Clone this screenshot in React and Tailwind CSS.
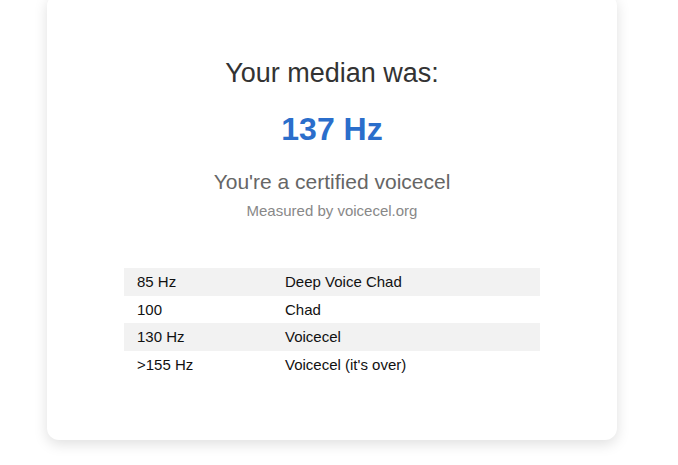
const rows = [
  { hz: '85 Hz', label: 'Deep Voice Chad' },
  { hz: '100', label: 'Chad' },
  { hz: '130 Hz', label: 'Voicecel' },
  { hz: '>155 Hz', label: "Voicecel (it's over)" },
];

export default function App() {
  return (
    <div className="min-h-screen bg-white font-['Liberation_Sans',Arial,sans-serif]">
      <div className="ml-[47px] -mt-[6px] w-[570px] rounded-xl bg-white pt-[63px] pb-[62px] shadow-[0_4px_14px_rgba(0,0,0,0.13)] flex flex-col items-center text-center">
        <h1 className="text-[27px] leading-[32px] text-[#333]">Your median was:</h1>
        <div className="mt-[21px] text-[32px] leading-[38px] font-bold text-[#2b6ecb]">137 Hz</div>
        <p className="mt-[21px] text-[21px] leading-[25px] text-[#666]">You're a certified voicecel</p>
        <p className="mt-[8px] text-[15px] leading-[18px] text-[#888]">Measured by voicecel.org</p>

        <table className="mt-[48px] w-[416px] text-left text-[15px] text-[#111] border-collapse">
          <tbody>
            {rows.map((r, i) => (
              <tr key={i} className={i % 2 === 0 ? 'bg-[#f2f2f2]' : ''}>
                <td className="w-[161px] pl-[13px] py-[5px] leading-[17.5px]">{r.hz}</td>
                <td className="py-[5px] leading-[17.5px]">{r.label}</td>
              </tr>
            ))}
          </tbody>
        </table>
      </div>
    </div>
  );
}
